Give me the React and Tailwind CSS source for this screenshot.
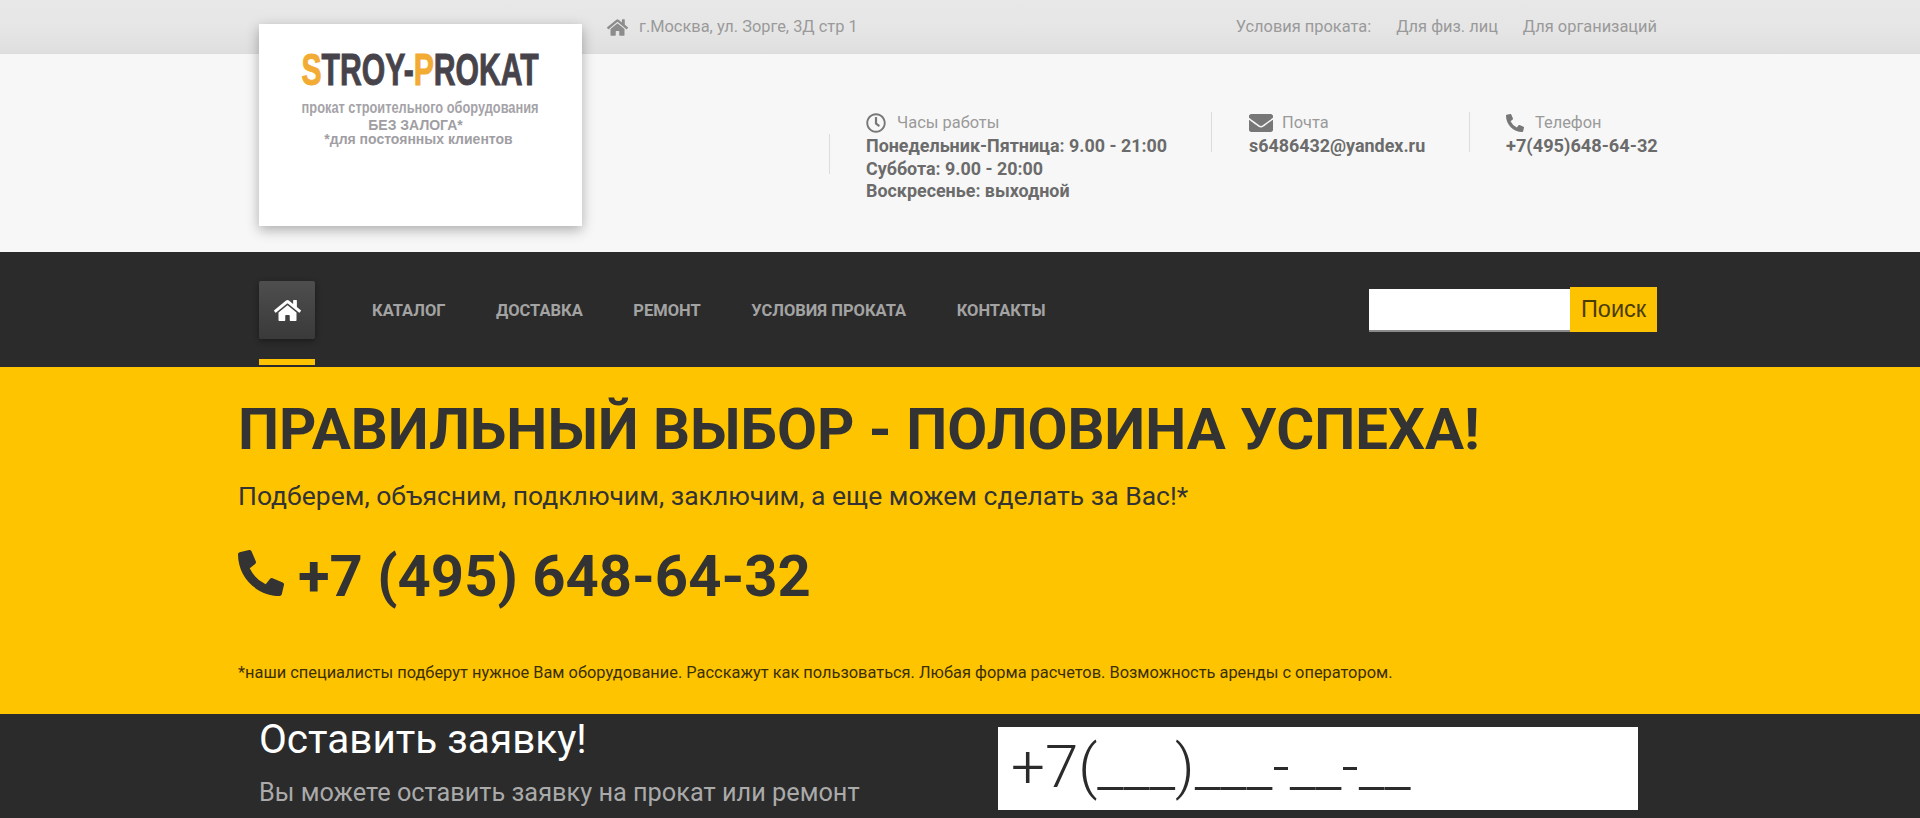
import React from 'react';
import { FaHome, FaPhoneAlt, FaEnvelope, FaRegClock } from 'react-icons/fa';

const navItems = ['Каталог', 'Доставка', 'Ремонт', 'Условия проката', 'Контакты'];

const Logo = () => (
    <div className="w-[323px] h-[202px] shrink-0 bg-white shadow-[0_4px_12px_rgba(0,0,0,0.3)] flex flex-col items-center pt-[27px] font-['Liberation_Sans',sans-serif]">
        <div className="h-[38px] text-[45px] leading-[38px] font-bold text-[#47434a] scale-x-[0.67] whitespace-nowrap [-webkit-text-stroke-width:1px]">
            <span className="text-[#f2ab33]">S</span>TROY-<span className="text-[#f2ab33]">P</span>ROKAT
        </div>
        <div className="mt-[10px] text-[16px] leading-[18px] font-bold text-[#a5a3a8] scale-x-[0.8] whitespace-nowrap">прокат строительного оборудования</div>
        <div className="mt-[1px] -ml-[10px] text-[14px] leading-[15px] font-bold text-[#a09ea3] whitespace-nowrap">БЕЗ ЗАЛОГА*</div>
        <div className="-ml-[4px] text-[14px] leading-[13px] font-bold text-[#a09ea3] whitespace-nowrap">*для постоянных клиентов</div>
    </div>
);

const App = () => {
    return (
        <div className="h-[818px] overflow-hidden font-['Roboto',sans-serif] bg-[#2b2b2b]">
            {/* Top bar */}
            <div className="h-[54px] bg-gradient-to-b from-[#e8e8e8] via-[#e6e6e6] to-[#dfdfdf] border-b border-[#dcdcdc]">
                <div className="ml-[607px] w-[1050px] h-[55px] flex items-center justify-between text-[16.4px] text-[#9a9a9a]">
                    <div className="flex items-center">
                        <FaHome className="w-[21px] h-[21px] text-[#8c8c8c] mr-[11px]" />
                        <span>г.Москва, ул. Зорге, 3Д стр 1</span>
                    </div>
                    <div className="flex gap-[25px]">
                        <span>Условия проката:</span>
                        <span>Для физ. лиц</span>
                        <span>Для организаций</span>
                    </div>
                </div>
            </div>

            {/* Header */}
            <div className="h-[198px] bg-[#f7f7f7]">
                <div className="ml-[259px] w-[1398px] flex">
                    <div className="-mt-[30px]"><Logo /></div>
                    <div className="flex-1 flex">
                        <div className="ml-[247px] mt-[80px] w-px h-[40px] bg-[#dcdcdc]" />
                        <div className="ml-[36px] mt-[57px] w-[345px] text-[17.9px] leading-[22.5px] font-bold text-[#6b6b6b]">
                            <div className="flex items-center h-[24px] font-normal text-[16.4px] text-[#9a9a9a]">
                                <FaRegClock className="w-[20px] h-[20px] text-[#777] mr-[11px]" />
                                <span>Часы работы</span>
                            </div>
                            <div>Понедельник-Пятница: 9.00 - 21:00</div>
                            <div>Суббота: 9.00 - 20:00</div>
                            <div>Воскресенье: выходной</div>
                        </div>
                        <div className="mt-[58px] w-px h-[40px] bg-[#dcdcdc]" />
                        <div className="ml-[37px] mt-[57px] w-[220px] text-[17.9px] leading-[22.5px] font-bold text-[#6b6b6b]">
                            <div className="flex items-center h-[24px] font-normal text-[16.4px] text-[#9a9a9a]">
                                <FaEnvelope className="w-[24px] h-[24px] text-[#777] mr-[9px]" />
                                <span>Почта</span>
                            </div>
                            <div>s6486432@yandex.ru</div>
                        </div>
                        <div className="mt-[58px] w-px h-[40px] bg-[#dcdcdc]" />
                        <div className="ml-[36px] mt-[57px] text-[18.2px] leading-[22.5px] font-bold text-[#6b6b6b] whitespace-nowrap">
                            <div className="flex items-center h-[24px] font-normal text-[16.4px] text-[#9a9a9a]">
                                <FaPhoneAlt className="w-[18px] h-[18px] text-[#777] mr-[11px]" />
                                <span>Телефон</span>
                            </div>
                            <div>+7(495)648-64-32</div>
                        </div>
                    </div>
                </div>
            </div>

            {/* Nav */}
            <div className="h-[115px] bg-[#2b2b2b]">
                <div className="ml-[259px] w-[1398px] h-full flex items-start">
                    <div className="w-[56px] h-[113px] flex flex-col">
                        <div className="mt-[29px] h-[58px] rounded-[2px] bg-gradient-to-b from-[#4e4e4e] to-[#3a3a3a] shadow-[0_2px_6px_rgba(0,0,0,0.4)] flex items-center justify-center">
                            <FaHome className="w-[27px] h-[27px] text-white" />
                        </div>
                        <div className="mt-[20px] h-[6px] bg-[#fdc300]" />
                    </div>
                    <div className="ml-[57px] h-[60px] mt-[29px] flex items-center gap-[50.5px] text-[16.5px] font-bold uppercase text-[#a3a3a3]">
                        {navItems.map((item) => (
                            <span key={item}>{item}</span>
                        ))}
                    </div>
                    <div className="ml-auto mt-[35px] flex items-stretch">
                        <input className="w-[201px] h-[43px] mt-[2px] bg-white border-b-2 border-[#8a8a8a] outline-none" />
                        <button className="w-[87px] h-[45px] bg-[#fdc300] text-[23.5px] text-[#4a3c05] font-['Liberation_Sans',sans-serif]">Поиск</button>
                    </div>
                </div>
            </div>

            {/* Hero */}
            <div className="h-[347px] bg-[#ffc400] pl-[238px] text-[#333]">
                <h1 className="pt-[27px] text-[58.1px] leading-[70px] font-bold whitespace-nowrap">ПРАВИЛЬНЫЙ ВЫБОР - ПОЛОВИНА УСПЕХА!</h1>
                <p className="mt-[16px] text-[26.5px] leading-[32px]">Подберем, объясним, подключим, заключим, а еще можем сделать за Вас!*</p>
                <div className="mt-[29px] flex items-center h-[70px] text-[58px] font-bold">
                    <FaPhoneAlt className="w-[46px] h-[46px] mr-[14px] -mt-[6px]" />
                    <span>+7 (495) 648-64-32</span>
                </div>
                <p className="mt-[52px] text-[16.4px] leading-[20px] text-[#3a2f00]">*наши специалисты подберут нужное Вам оборудование. Расскажут как пользоваться. Любая форма расчетов. Возможность аренды с оператором.</p>
            </div>

            {/* Request form */}
            <div className="h-[104px] flex">
                <div className="ml-[259px] w-[739px]">
                    <h2 className="mt-[2px] text-[40.5px] leading-[46px] text-white">Оставить заявку!</h2>
                    <p className="mt-[15px] text-[25.3px] leading-[32px] text-[#aaaaaa]">Вы можете оставить заявку на прокат или ремонт</p>
                </div>
                <div className="mt-[13px] w-[640px] h-[83px] bg-white pl-[13px] text-[60px] leading-[80px] text-[#2b2b2b] font-light">+7(___)___-__-__</div>
            </div>
        </div>
    );
};

export default App;
